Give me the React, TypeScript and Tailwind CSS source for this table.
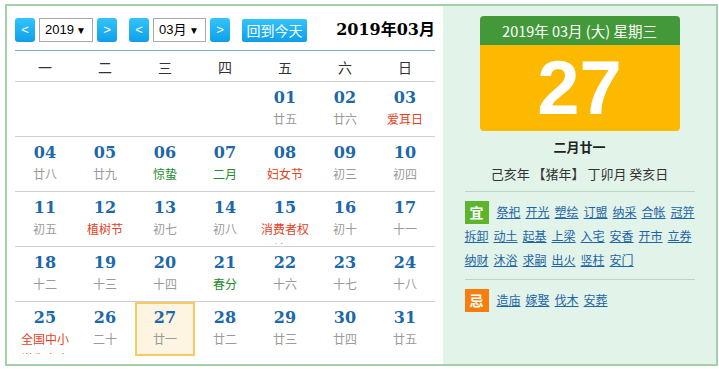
const CJK = "font-['Noto_Sans_CJK_SC',sans-serif]";

type Day = { d: string; l: string; t?: "red" | "green" };

const weeks: (Day | null)[][] = [
	[null, null, null, null, { d: "01", l: "廿五" }, { d: "02", l: "廿六" }, { d: "03", l: "爱耳日", t: "red" }],
	[
		{ d: "04", l: "廿八" },
		{ d: "05", l: "廿九" },
		{ d: "06", l: "惊蛰", t: "green" },
		{ d: "07", l: "二月", t: "green" },
		{ d: "08", l: "妇女节", t: "red" },
		{ d: "09", l: "初三" },
		{ d: "10", l: "初四" },
	],
	[
		{ d: "11", l: "初五" },
		{ d: "12", l: "植树节", t: "red" },
		{ d: "13", l: "初七" },
		{ d: "14", l: "初八" },
		{ d: "15", l: "消费者权益日", t: "red" },
		{ d: "16", l: "初十" },
		{ d: "17", l: "十一" },
	],
	[
		{ d: "18", l: "十二" },
		{ d: "19", l: "十三" },
		{ d: "20", l: "十四" },
		{ d: "21", l: "春分", t: "green" },
		{ d: "22", l: "十六" },
		{ d: "23", l: "十七" },
		{ d: "24", l: "十八" },
	],
	[
		{ d: "25", l: "全国中小学生安全教育日", t: "red" },
		{ d: "26", l: "二十" },
		{ d: "27", l: "廿一" },
		{ d: "28", l: "廿二" },
		{ d: "29", l: "廿三" },
		{ d: "30", l: "廿四" },
		{ d: "31", l: "廿五" },
	],
];

const yi = ["祭祀", "开光", "塑绘", "订盟", "纳采", "合帐", "冠笄", "拆卸", "动土", "起基", "上梁", "入宅", "安香", "开市", "立券", "纳财", "沐浴", "求嗣", "出火", "竖柱", "安门"];
const ji = ["造庙", "嫁娶", "伐木", "安葬"];

function NavButton({ label }: { label: string }) {
	return (
		<div className="flex h-[24px] w-[20px] items-center justify-center rounded-[3px] bg-gradient-to-b from-[#33c3fb] to-[#0b9fe9] font-['Liberation_Sans',sans-serif] text-[13px] text-white">
			{label}
		</div>
	);
}

function FakeSelect({ value, width }: { value: string; width: string }) {
	return (
		<div className={`flex h-[24px] ${width} items-center justify-between border border-[#a9a9a9] bg-white pr-[6px] pl-[5px] font-['Liberation_Sans','Noto_Sans_CJK_SC',sans-serif] text-[13px] text-black`}>
			<span>{value}</span>
			<span className="text-[10px]">▼</span>
		</div>
	);
}

function DayCell({ day, today }: { day: Day | null; today: boolean }) {
	const lunarColor =
		day?.t === "red" ? "text-[#e4411d]" : day?.t === "green" ? "text-[#238a2c]" : "text-[#9a9a9a]";
	return (
		<div
			className={`h-full w-[60px] overflow-hidden border-2 pt-[3px] text-center ${
				today ? "border-[#f7cb62] bg-[#fdf4e2]" : "border-transparent"
			}`}
		>
			{day && (
				<>
					<div className="font-['DejaVu_Serif',serif] font-bold text-[#1c68a9] text-[16px] leading-[22px]">
						{day.d}
					</div>
					<div className={`px-[3px] text-[12px] leading-[20px] ${CJK} ${lunarColor}`}>{day.l}</div>
				</>
			)}
		</div>
	);
}

function Link({ text }: { text: string }) {
	return (
		<span className={`h-[24px] text-[12px] text-[#1e65a6] leading-[24px] underline ${CJK}`}>{text}</span>
	);
}

export default function App() {
	return (
		<div className="h-[371px] w-[719px] bg-white pt-[4px] pl-[5px]">
			<div className="flex h-[362px] w-[713px] border-2 border-[#a4cfaa]">
				{/* calendar grid */}
				<div className="w-[436px] bg-white pt-[12px] pl-[8px]">
					<div className="flex h-[24px] w-[420px] items-center">
						<NavButton label="<" />
						<div className="ml-[4px]">
							<FakeSelect value="2019" width="w-[54px]" />
						</div>
						<div className="ml-[4px]">
							<NavButton label=">" />
						</div>
						<div className="ml-[12px]">
							<NavButton label="<" />
						</div>
						<div className="ml-[4px]">
							<FakeSelect value="03月" width="w-[53px]" />
						</div>
						<div className="ml-[4px]">
							<NavButton label=">" />
						</div>
						<div
							className={`ml-[12px] flex h-[23px] w-[65px] items-center justify-center rounded-[2px] bg-gradient-to-b from-[#33c3fb] to-[#0b9fe9] text-[14px] text-white ${CJK}`}
						>
							回到今天
						</div>
						<div className="ml-auto font-['DejaVu_Serif','Noto_Sans_CJK_SC',serif] font-bold text-[16px] text-black">
							2019年03月
						</div>
					</div>

					<div className="mt-[8px] w-[420px]">
						<div className="flex h-[32px] border-[#78acdb] border-t border-b-[#cfcfcf] border-b pt-[3px]">
							{["一", "二", "三", "四", "五", "六", "日"].map((w) => (
								<div key={w} className={`flex w-[60px] items-center justify-center text-[#333] text-[14px] ${CJK}`}>
									{w}
								</div>
							))}
						</div>
						{weeks.map((week, i) => (
							<div
								key={i}
								className={`flex ${i < weeks.length - 1 ? "h-[55px] border-[#cfcfcf] border-b" : "h-[54px]"}`}
							>
								{week.map((day, j) => (
									<DayCell key={j} day={day} today={day?.d === "27"} />
								))}
							</div>
						))}
					</div>
				</div>

				{/* today detail */}
				<div className="flex flex-1 flex-col items-center bg-[#e2f3e9] pt-[10px]">
					<div className="w-[200px]">
						<div
							className={`h-[29px] rounded-t-[4px] bg-[#43993a] text-center text-[14.5px] text-white leading-[29px] ${CJK}`}
						>
							2019年 03月 (大) 星期三
						</div>
						<div className="h-[86px] rounded-b-[4px] bg-[#fdb900] text-center font-['Liberation_Sans',sans-serif] font-bold text-[76px] text-white leading-[86px]">
							27
						</div>
					</div>
					<div className={`mt-[6px] font-bold text-[#222] text-[13px] leading-[20px] ${CJK}`}>二月廿一</div>
					<div className={`mt-[7px] text-[#333] text-[13px] leading-[20px] ${CJK}`}>
						己亥年 【猪年】 丁卯月 癸亥日
					</div>
					<div className="mt-[7px] h-px w-[230px] bg-[#b8d8c6]" />
					<div className="flex w-[232px] flex-wrap gap-x-[5px] pt-[8px] pl-[1px]">
						<div className="mr-[3px] flex h-[24px] items-center">
							<span
								className={`flex h-[23px] w-[24px] items-center justify-center bg-[#5db52d] font-bold text-[14px] text-white ${CJK}`}
							>
								宜
							</span>
						</div>
						{yi.map((t) => (
							<Link key={t} text={t} />
						))}
					</div>
					<div className="mt-[7px] h-px w-[230px] bg-[#b8d8c6]" />
					<div className="flex w-[232px] flex-wrap gap-x-[5px] pt-[8px] pl-[1px]">
						<div className="mr-[3px] flex h-[24px] items-center">
							<span
								className={`flex h-[23px] w-[24px] items-center justify-center bg-[#f77d0c] font-bold text-[14px] text-white ${CJK}`}
							>
								忌
							</span>
						</div>
						{ji.map((t) => (
							<Link key={t} text={t} />
						))}
					</div>
				</div>
			</div>
		</div>
	);
}
